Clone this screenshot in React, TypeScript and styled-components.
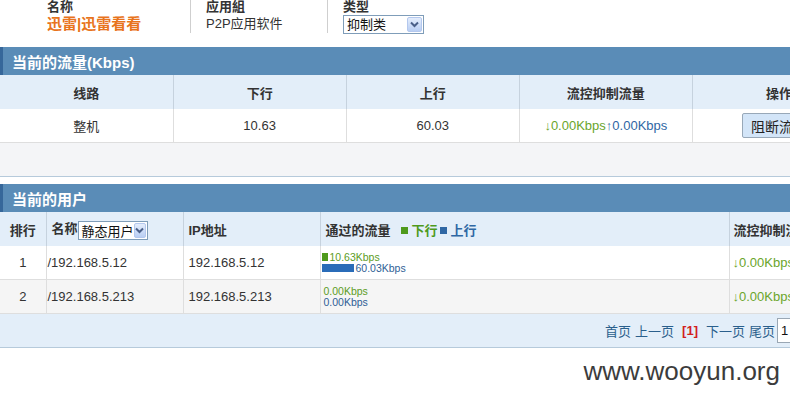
import React from 'react';
import styled, { createGlobalStyle } from 'styled-components';

type FlowRow = {
    rank: number,
    name: string,
    ip: string,
    down: number,
    up: number,
}

const users: FlowRow[] = [
    { rank: 1, name: '/192.168.5.12', ip: '192.168.5.12', down: 10.63, up: 60.03 },
    { rank: 2, name: '/192.168.5.213', ip: '192.168.5.213', down: 0, up: 0 },
];

const GlobalStyle = createGlobalStyle`
  body {
    margin: 0;
    background: #fff;
    color: #333;
    font-family: "Liberation Sans", "Noto Sans CJK SC", sans-serif;
    font-size: 13px;
    overflow: hidden;
  }
`

const InfoBar = styled.div`
  display: flex;
  height: 33px;
`

const InfoCol = styled.div<{ $w: number, $pl: number, $sep?: boolean }>`
  width: ${p => p.$w}px;
  padding-left: ${p => p.$pl}px;
  box-sizing: border-box;
  border-left: ${p => p.$sep ? '1px solid #cfcfcf' : 'none'};
  display: flex;
  flex-direction: column;
`

const InfoLabel = styled.div`
  font-weight: bold;
  font-size: 13px;
  line-height: 13px;
  color: #333;
`

const InfoValue = styled.div<{ $orange?: boolean }>`
  margin-top: 2px;
  line-height: 18px;
  font-size: ${p => p.$orange ? '15px' : '13px'};
  font-weight: ${p => p.$orange ? 'bold' : 'normal'};
  color: ${p => p.$orange ? '#e8741c' : '#333'};
`

const SelectBox = styled.div<{ $w: number }>`
  display: inline-flex;
  align-items: center;
  justify-content: space-between;
  box-sizing: border-box;
  width: ${p => p.$w}px;
  height: 19px;
  padding: 0 1px 0 3px;
  border: 1px solid #7f9db9;
  background: #fff;
  font-size: 13px;
  font-weight: normal;
  color: #111;
  vertical-align: middle;
`

const SelectArrow = styled.span`
  display: flex;
  align-items: center;
  justify-content: center;
  width: 15px;
  height: 15px;
  box-sizing: border-box;
  border: 1px solid #b4c8ee;
  border-radius: 2px;
  background: linear-gradient(#e4edfc, #b9cef3);
`

const Section = styled.div<{ $mt: number }>`
  width: 866px;
  margin-top: ${p => p.$mt}px;
`

const SectionBar = styled.div`
  height: 28px;
  display: flex;
  align-items: center;
  padding-left: 9px;
  background: #5a8cb7;
  border-left: 3px solid #36679a;
  color: #fff;
  font-size: 15px;
  font-weight: bold;
`

const Table = styled.table`
  width: 866px;
  border-collapse: collapse;
  table-layout: fixed;
`

const Th = styled.th<{ $align?: string, $pl?: number }>`
  height: 34px;
  padding: 0 0 0 ${p => p.$pl ?? 0}px;
  background: #e3eef9;
  border-right: 1px solid #c6d2de;
  text-align: ${p => p.$align ?? 'center'};
  font-size: 13px;
  font-weight: bold;
  color: #333;
  white-space: nowrap;
  overflow: hidden;
`

const Tr = styled.tr<{ $alt?: boolean }>`
  background: ${p => p.$alt ? '#f5f5f5' : '#fff'};
`

const Td = styled.td<{ $align?: string, $pl?: number }>`
  height: 33px;
  padding: 0 0 0 ${p => p.$pl ?? 0}px;
  border-right: 1px solid #dedede;
  border-bottom: 1px solid #dedede;
  text-align: ${p => p.$align ?? 'center'};
  font-size: 13px;
  color: #333;
  white-space: nowrap;
  overflow: hidden;
`

const Filler = styled.div`
  height: 33px;
  background: #f4f5f7;
  border-bottom: 1px solid #b6cadb;
`

const Down = styled.span`
  color: #6aa52b;
`

const Up = styled.span`
  color: #2f67a4;
`

const BlockButton = styled.button`
  height: 25px;
  padding: 0 8px;
  background: #d3e5f8;
  border: 1px solid #98a8b8;
  border-radius: 2px;
  font-family: "Noto Sans CJK SC", sans-serif;
  font-size: 14px;
  color: #222;
`

const LegendGroup = styled.span`
  margin-left: 8px;
`

const Legend = styled.span<{ $color: string }>`
  margin-left: 2px;
  color: ${p => p.$color};
  &::before {
    content: '';
    display: inline-block;
    width: 7px;
    height: 7px;
    margin-right: 4px;
    background: ${p => p.$color};
    vertical-align: 1px;
  }
`

const FlowLine = styled.div<{ $color: string }>`
  display: flex;
  align-items: center;
  height: 10px;
  font-size: 10.5px;
  line-height: 10px;
  color: ${p => p.$color};
  & + & {
    margin-top: 1px;
  }
`

const FlowBar = styled.span<{ $color: string }>`
  display: inline-block;
  height: 8px;
  margin-right: 2px;
  background: ${p => p.$color};
`

const Pager = styled.div`
  height: 33px;
  display: flex;
  align-items: center;
  justify-content: flex-end;
  gap: 4px;
  padding-right: 12px;
  background: #e3eef9;
  border-bottom: 1px solid #b6cadb;
  font-size: 13px;
  color: #2a5f8c;
`

const PageCurrent = styled.span`
  color: #d21f1f;
  font-weight: bold;
  margin: 0 4px;
`

const PageInput = styled.div`
  width: 30px;
  height: 25px;
  box-sizing: border-box;
  margin-left: -2px;
  padding-left: 3px;
  border: 1px solid #9aa7b4;
  background: #fff;
  color: #111;
  line-height: 23px;
`

const PageGo = styled.span`
  width: 43px;
`

const Watermark = styled.div`
  margin-top: 8px;
  padding-right: 10px;
  text-align: right;
  font-family: "Liberation Sans", sans-serif;
  font-size: 26px;
  color: #3c3c3c;
`

const Chevron = () => (
    <SelectArrow>
        <svg width="9" height="7" viewBox="0 0 9 7">
            <path d="M1 1.5 L4.5 5 L8 1.5" fill="none" stroke="#4a5f88" strokeWidth="2" />
        </svg>
    </SelectArrow>
)

const fmt = (v: number) => `${v.toFixed(2)}Kbps`;

const App: React.FC = () => {
    return (
        <>
            <GlobalStyle />
            <InfoBar>
                <InfoCol $w={190} $pl={47}>
                    <InfoLabel>名称</InfoLabel>
                    <InfoValue $orange>迅雷|迅雷看看</InfoValue>
                </InfoCol>
                <InfoCol $w={137} $pl={15} $sep>
                    <InfoLabel>应用組</InfoLabel>
                    <InfoValue>P2P应用软件</InfoValue>
                </InfoCol>
                <InfoCol $w={200} $pl={15} $sep>
                    <InfoLabel>类型</InfoLabel>
                    <InfoValue>
                        <SelectBox $w={81}>抑制类<Chevron /></SelectBox>
                    </InfoValue>
                </InfoCol>
            </InfoBar>

            <Section $mt={14}>
                <SectionBar>当前的流量(Kbps)</SectionBar>
                <Table>
                    <thead>
                        <tr>
                            <Th>线路</Th>
                            <Th>下行</Th>
                            <Th>上行</Th>
                            <Th>流控抑制流量</Th>
                            <Th>操作</Th>
                        </tr>
                    </thead>
                    <tbody>
                        <Tr>
                            <Td>整机</Td>
                            <Td>10.63</Td>
                            <Td>60.03</Td>
                            <Td><Down>↓{fmt(0)}</Down><Up>↑{fmt(0)}</Up></Td>
                            <Td><BlockButton>阻断流量</BlockButton></Td>
                        </Tr>
                    </tbody>
                </Table>
                <Filler />
            </Section>

            <Section $mt={7}>
                <SectionBar>当前的用户</SectionBar>
                <Table>
                    <colgroup>
                        <col style={{ width: 46 }} />
                        <col style={{ width: 137 }} />
                        <col style={{ width: 137 }} />
                        <col style={{ width: 409 }} />
                        <col style={{ width: 137 }} />
                    </colgroup>
                    <thead>
                        <tr>
                            <Th>排行</Th>
                            <Th $align="left" $pl={5}>名称<SelectBox $w={70}>静态用户<Chevron /></SelectBox></Th>
                            <Th $align="left" $pl={5}>IP地址</Th>
                            <Th $align="left" $pl={5}>
                                通过的流量
                                <LegendGroup>
                                    <Legend $color="#4e9a1c">下行</Legend>
                                    <Legend $color="#2f67a4">上行</Legend>
                                </LegendGroup>
                            </Th>
                            <Th $align="left" $pl={4}>流控抑制流量</Th>
                        </tr>
                    </thead>
                    <tbody>
                        {users.map((u) => (
                            <Tr key={u.rank} $alt={u.rank % 2 === 0}>
                                <Td>{u.rank}</Td>
                                <Td $align="left" $pl={1}>{u.name}</Td>
                                <Td $align="left" $pl={5}>{u.ip}</Td>
                                <Td $align="left" $pl={1}>
                                    <FlowLine $color="#5c9c1e">
                                        <FlowBar $color="#4e9a1c" style={{ width: Math.round(u.down * 0.6) }} />
                                        {fmt(u.down)}
                                    </FlowLine>
                                    <FlowLine $color="#2f5f96">
                                        <FlowBar $color="#2a6cb8" style={{ width: Math.round(u.up * 0.54) }} />
                                        {fmt(u.up)}
                                    </FlowLine>
                                </Td>
                                <Td $align="left" $pl={3}><Down>↓{fmt(0)}</Down><Up>↑{fmt(0)}</Up></Td>
                            </Tr>
                        ))}
                    </tbody>
                </Table>
                <Pager>
                    <span>首页</span>
                    <span>上一页</span>
                    <PageCurrent>[1]</PageCurrent>
                    <span>下一页</span>
                    <span>尾页</span>
                    <PageInput>1</PageInput>
                    <PageGo />
                </Pager>
            </Section>

            <Watermark>www.wooyun.org</Watermark>
        </>
    );
}

export default App;
